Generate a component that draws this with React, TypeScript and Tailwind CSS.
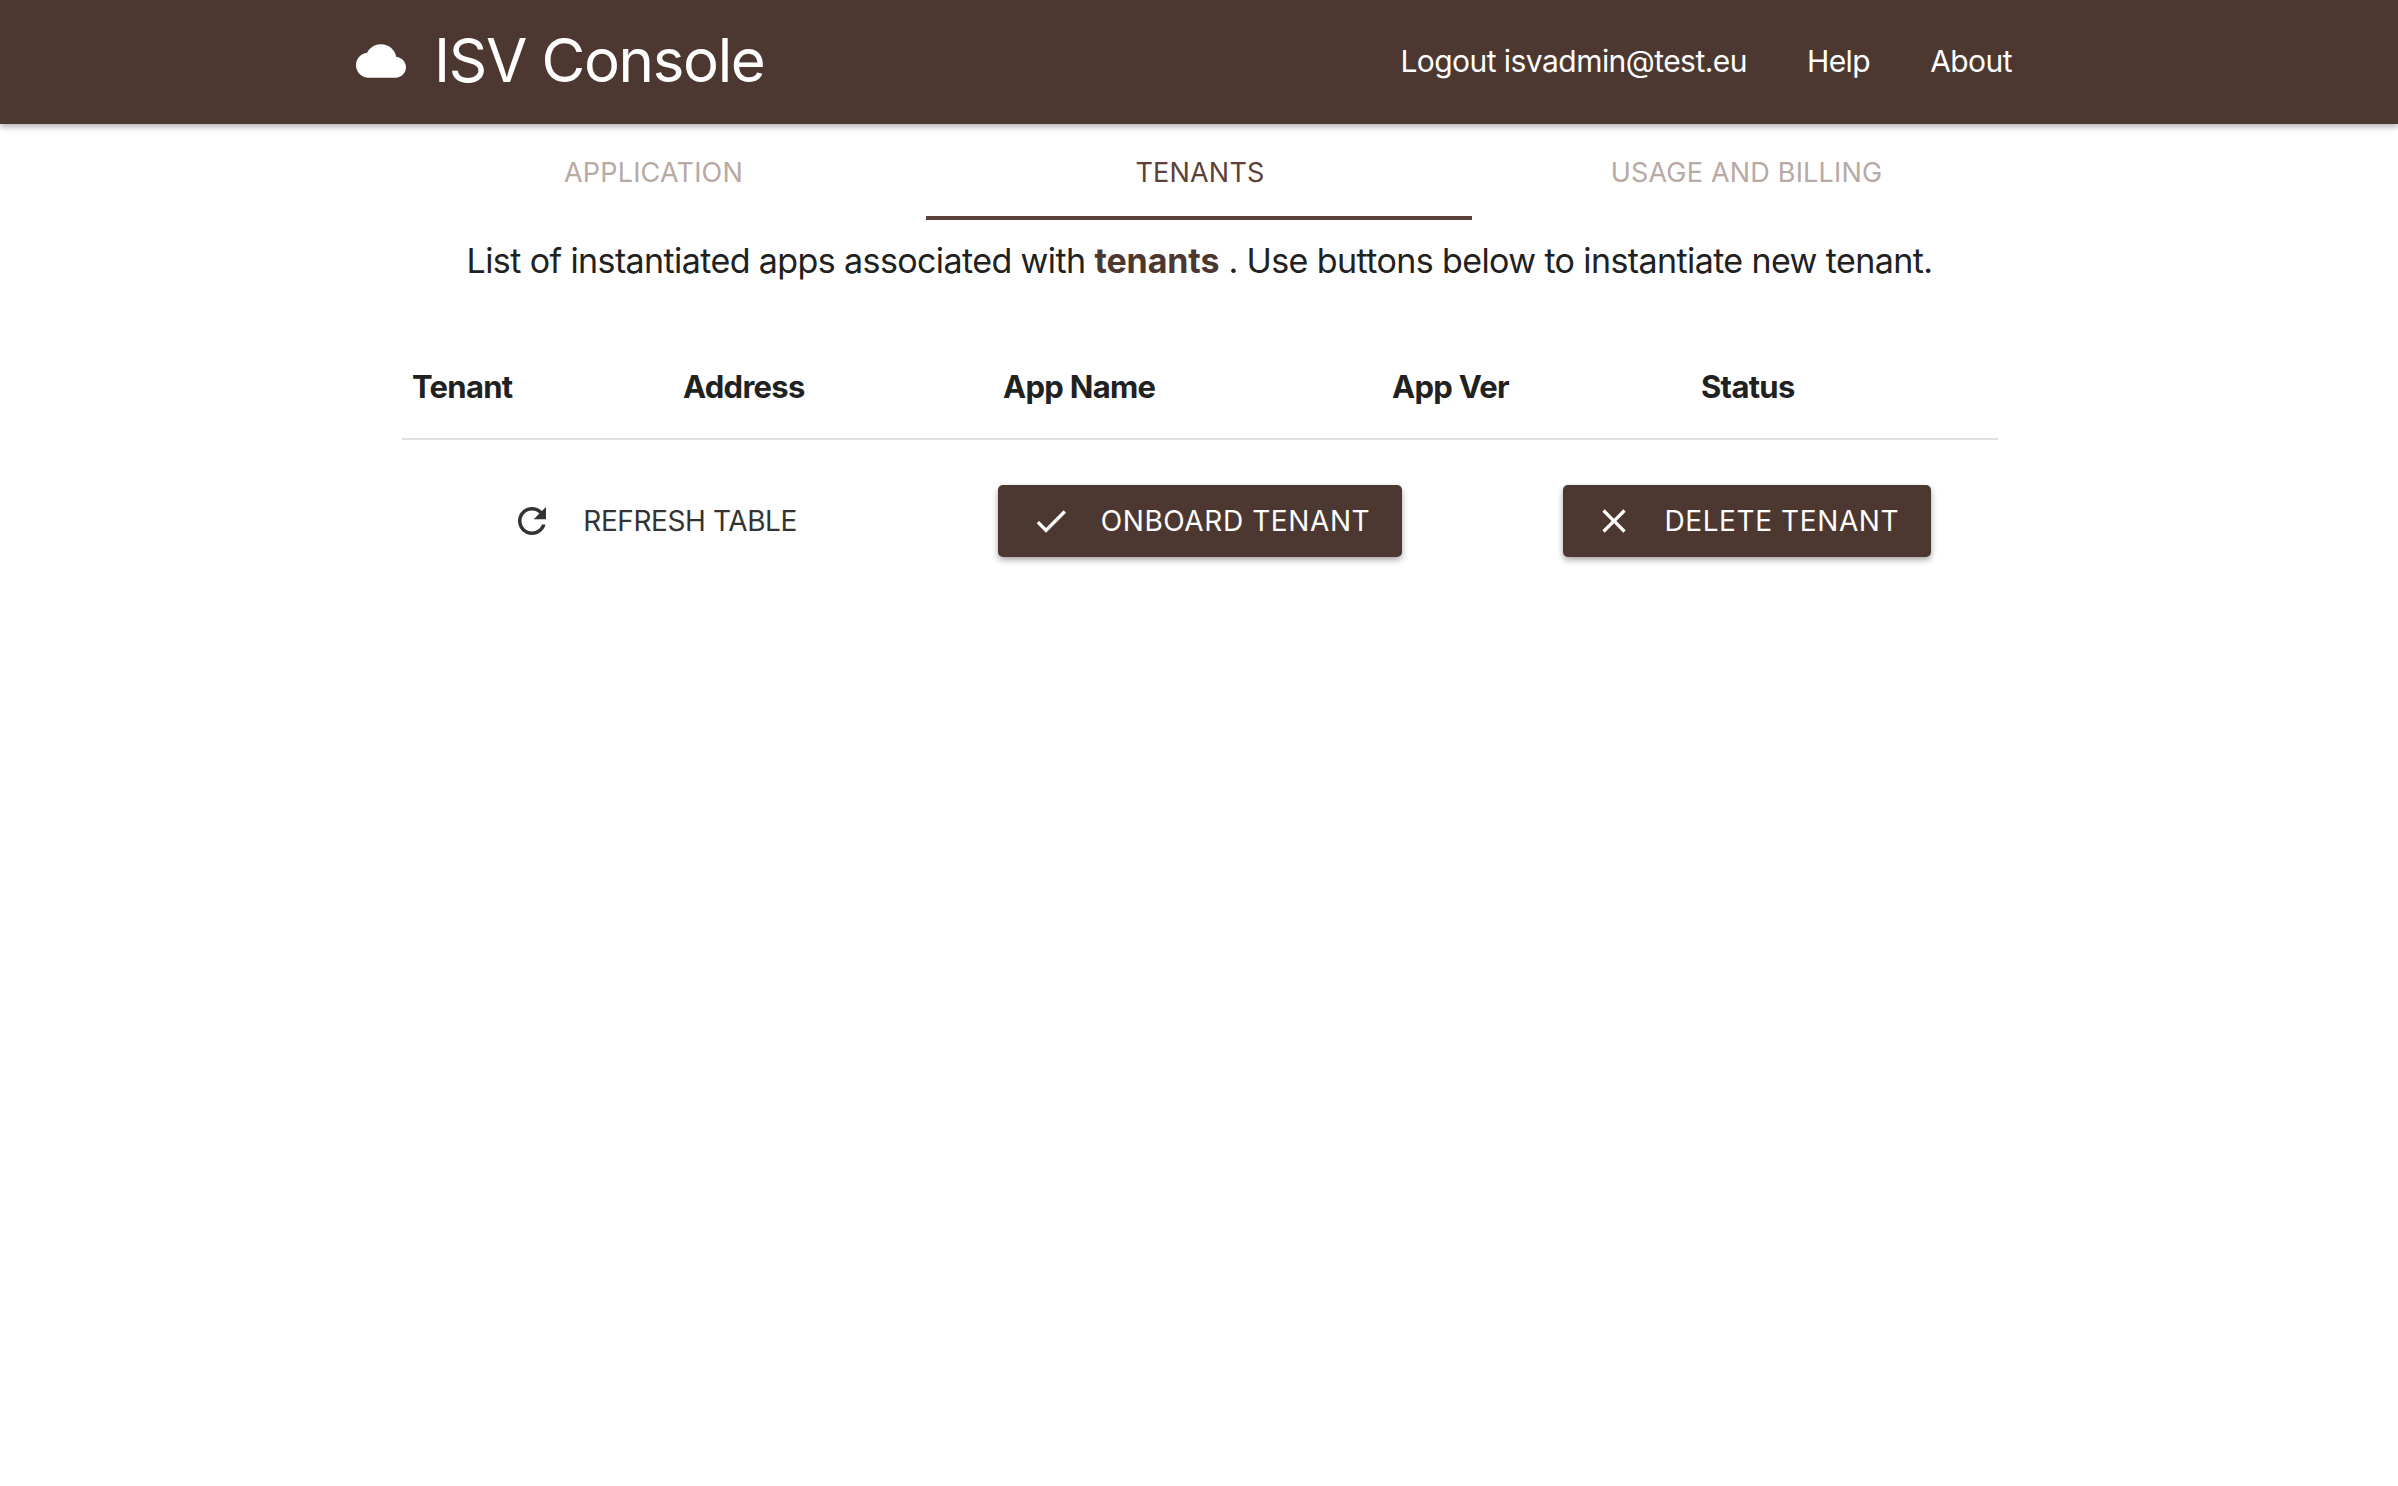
function MaterialIcon({ d, className }: { d: string; className: string }) {
  return (
    <svg viewBox="0 0 24 24" className={className} fill="currentColor">
      <path d={d} />
    </svg>
  );
}

export default function App() {
  return (
    <div className="min-h-[1486px] bg-white font-['Inter',sans-serif] text-[#212121]">
      <header className="h-[124px] bg-[#4c3830] shadow-[0_3px_6px_rgba(0,0,0,0.3)] text-white flex items-center pl-[356px] pr-[386px] relative">
        <MaterialIcon
          className="w-[50px] h-[50px] mr-[28px] -mt-[2px]"
          d="M19.35 10.04C18.67 6.59 15.64 4 12 4 9.11 4 6.6 5.64 5.35 8.04 2.34 8.36 0 10.91 0 14c0 3.31 2.69 6 6 6h13c2.76 0 5-2.24 5-5 0-2.64-2.05-4.78-4.65-4.96z"
        />
        <div className="text-[60px] leading-none font-normal tracking-[-1.35px] -mt-[4px]">ISV Console</div>
        <nav className="ml-auto flex gap-[60px] text-[30px] tracking-[-0.55px] -mt-[2px]">
          <span>Logout isvadmin@test.eu</span>
          <span>Help</span>
          <span>About</span>
        </nav>
      </header>
      <main className="w-[1639px] ml-[381px]">
        <div className="grid grid-cols-3 w-[1638px] -ml-[1px] h-[96px] text-[27px] tracking-[0.2px]">
          <div className="flex items-center justify-center text-[#b8a9a3] border-b-[4px] border-transparent pt-[6px] pl-[1px]">APPLICATION</div>
          <div className="flex items-center justify-center text-[#5d4037] border-b-[4px] border-[#5d4037] pt-[6px] pl-[2px]">TENANTS</div>
          <div className="flex items-center justify-center text-[#b8a9a3] border-b-[4px] border-transparent pt-[6px] pl-[3px]">USAGE AND BILLING</div>
        </div>
        <p className="text-center text-[34px] leading-[50px] mt-[16px] tracking-[-0.6px] pr-[2px]">
          List of instantiated apps associated with <b className="text-[#4c3830] tracking-[-0.1px]">tenants</b> . Use buttons below to instantiate new tenant.
        </p>
        <div className="grid grid-cols-[271px_320px_389px_309px_1fr] ml-[21px] mr-[22px] mt-[50px] h-[104px] items-center px-[10px] font-bold text-[31px] tracking-[-0.7px] border-b-2 border-[#e0e0e0] -mb-[1px]">
          <span>Tenant</span>
          <span>Address</span>
          <span>App Name</span>
          <span>App Ver</span>
          <span>Status</span>
        </div>
        <div className="grid grid-cols-3 mt-[46px]">
          <div className="flex justify-center">
            <div className="h-[72px] flex items-center text-[28px] tracking-[-0.4px] text-[#333]">
              <MaterialIcon
                className="w-[42px] h-[42px] mr-[30px]"
                d="M17.65 6.35C16.2 4.9 14.21 4 12 4c-4.42 0-7.99 3.58-7.99 8s3.57 8 7.99 8c3.73 0 6.84-2.55 7.73-6h-2.08c-.82 2.33-3.04 4-5.65 4-3.31 0-6-2.69-6-6s2.69-6 6-6c1.66 0 3.14.69 4.22 1.78L13 11h7V4l-2.35 2.35z"
              />
              REFRESH TABLE
            </div>
          </div>
          <div className="flex justify-center">
            <button className="h-[72px] w-[404px] flex items-center justify-center rounded-[5px] bg-[#4c3830] text-white text-[28px] tracking-[0.6px] shadow-[0_3px_6px_rgba(0,0,0,0.35)]">
              <MaterialIcon
                className="w-[40px] h-[40px] mr-[30px]"
                d="M9 16.17L4.83 12l-1.42 1.41L9 19 21 7l-1.41-1.41z"
              />
              ONBOARD TENANT
            </button>
          </div>
          <div className="flex justify-center">
            <button className="h-[72px] w-[368px] flex items-center justify-center rounded-[5px] bg-[#4c3830] text-white text-[28px] tracking-[0.6px] shadow-[0_3px_6px_rgba(0,0,0,0.35)]">
              <MaterialIcon
                className="w-[40px] h-[40px] mr-[30px]"
                d="M19 6.41L17.59 5 12 10.59 6.41 5 5 6.41 10.59 12 5 17.59 6.41 19 12 13.41 17.59 19 19 17.59 13.41 12z"
              />
              DELETE TENANT
            </button>
          </div>
        </div>
      </main>
    </div>
  );
}
